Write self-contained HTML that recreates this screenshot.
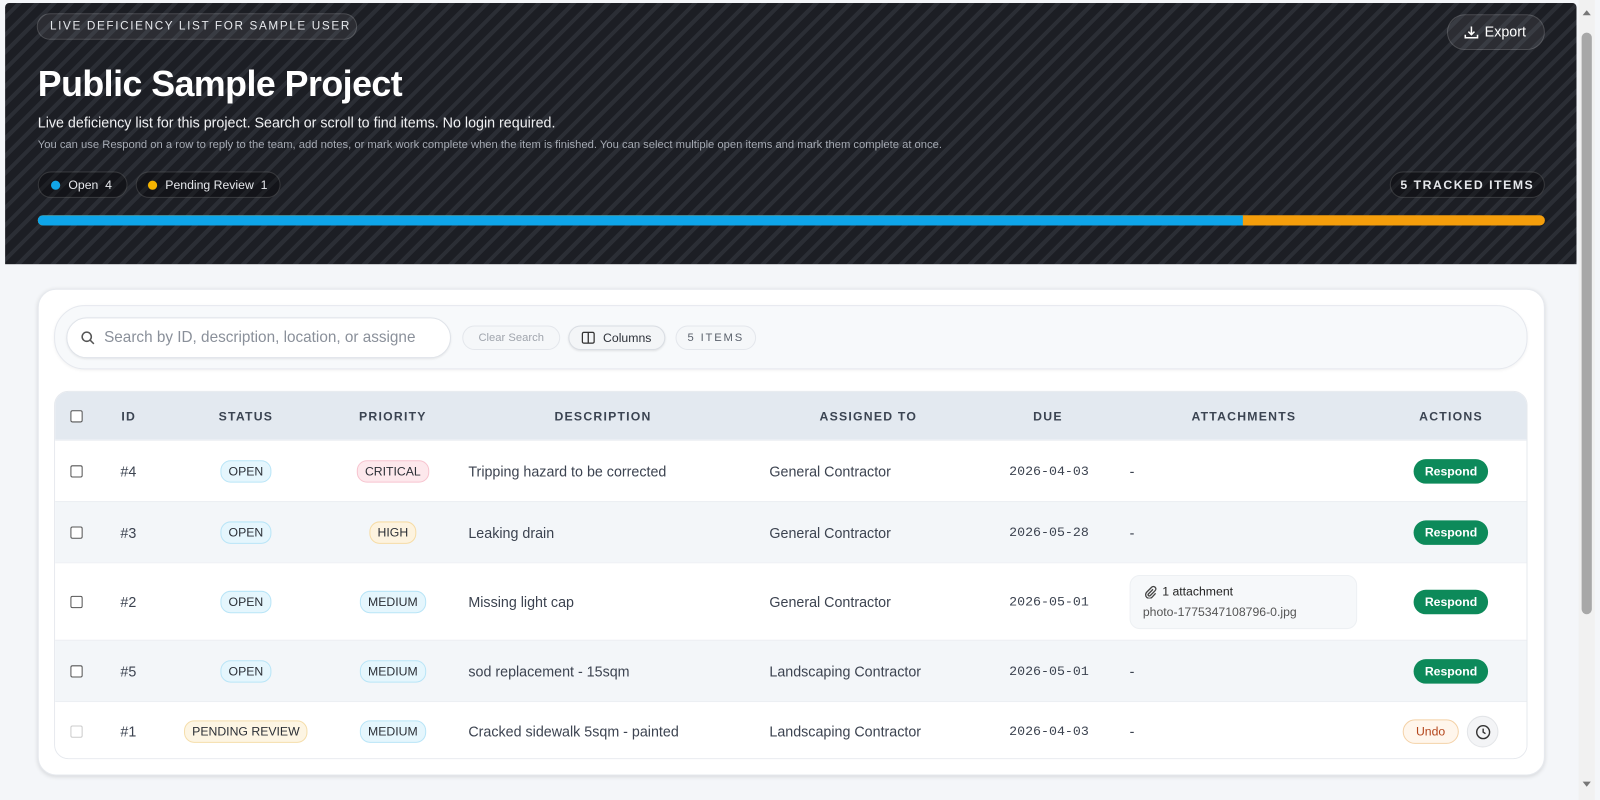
<!DOCTYPE html><html><head><style>
*{box-sizing:border-box;margin:0;padding:0}
html,body{width:1600px;height:800px;overflow:hidden;background:#f4f6f9;font-family:"Liberation Sans",sans-serif}
#w{position:absolute;left:0;top:0;width:1568px;height:784px;transform:scale(1.0204);transform-origin:0 0}
.hdr{position:absolute;left:5px;top:3px;width:1540px;height:256px;background:#1d1f25;background-image:repeating-linear-gradient(135deg,#1c1e24 0 8px,#2b2e35 8px 12px);border-radius:4px 4px 0 0}
.pill{position:absolute;border-radius:20px;border:1px solid rgba(255,255,255,.15);background:rgba(255,255,255,.07);color:#e6e8ec;white-space:nowrap}
.sb{position:absolute;left:1547px;top:0;width:16px;height:784px;background:#f1f1f1}
.card{position:absolute;left:37px;top:283px;width:1477px;height:477px;background:#fff;border-radius:18px;box-shadow:0 1px 4px rgba(0,0,0,.12);border:1px solid #e6e9ee}
.tool{position:absolute;left:53px;top:299px;width:1444px;height:63px;border-radius:30px;background:#f7f9fb;border:1px solid #e5e8ee;box-shadow:0 1px 3px rgba(0,0,0,.06)}
.tbl{position:absolute;left:53px;top:383px;width:1444px;height:361px;border-radius:14px;overflow:hidden;border:1px solid #e6e9ee}
.th{height:47px;background:#e3e9f0;position:relative;font-size:12px;letter-spacing:1.2px;color:#3b4452;font-weight:bold}
.row{position:relative;border-top:1px solid #eceff3;font-size:14px;color:#3c4350}
.a{position:absolute;top:50%;transform:translateY(-50%);white-space:nowrap}
.c{transform:translate(-50%,-50%)}
.cb{width:12px;height:12px;border:1.3px solid #555;border-radius:2px;background:#fff}
.bd{font-size:12px;padding:3px 7px;border-radius:10px;color:#2b2f36}
.open{background:#e5f6fd;border:1px solid #b9e5f7}
.resp{background:#0d8a5a;color:#fff;font-size:12px;padding:5px 11px;border-radius:12px;font-weight:bold}
.mono{font-family:"Liberation Mono",monospace;font-size:13px}
</style></head><body><div id="w">
<div class="hdr">
<div class="pill" style="left:31px;top:10px;height:26px;width:314px;font-size:11.5px;letter-spacing:1.6px;line-height:24px;padding-left:12px">LIVE DEFICIENCY LIST FOR SAMPLE USER</div>
<div class="pill" style="left:1413px;top:11px;width:96px;height:35px;font-size:14px;line-height:33px;padding-left:36px;color:#fff">Export<svg style="position:absolute;left:16px;top:10px" width="14" height="14" viewBox="0 0 14 14" fill="none" stroke="#fff" stroke-width="1.5"><path d="M7 1v8M4 6l3 3 3-3M1 9v3h12V9"/></svg></div>
<div style="position:absolute;left:32px;top:60px;font-size:35px;font-weight:bold;color:#fff;letter-spacing:-.5px">Public Sample Project</div>
<div style="position:absolute;left:32px;top:109px;font-size:14px;color:#f0f1f3">Live deficiency list for this project. Search or scroll to find items. No login required.</div>
<div style="position:absolute;left:32px;top:133px;font-size:11px;color:#a5aab3">You can use Respond on a row to reply to the team, add notes, or mark work complete when the item is finished. You can select multiple open items and mark them complete at once.</div>
<div class="pill" style="left:32px;top:165px;width:88px;height:26px;font-size:12px;line-height:24px;padding-left:29px;background:rgba(0,0,0,.3)"><span style="position:absolute;left:12px;top:8px;width:9px;height:9px;border-radius:50%;background:#12a6e8"></span>Open &nbsp;4</div>
<div class="pill" style="left:128px;top:165px;width:142px;height:26px;font-size:12px;line-height:24px;padding-left:28px;background:rgba(0,0,0,.3)"><span style="position:absolute;left:11px;top:8px;width:9px;height:9px;border-radius:50%;background:#f5b300"></span>Pending Review &nbsp;1</div>
<div class="pill" style="left:1357px;top:165px;width:152px;height:26px;font-size:12px;line-height:24px;text-align:center;letter-spacing:1.5px;font-weight:bold;background:rgba(0,0,0,.3)">5 TRACKED ITEMS</div>
<div style="position:absolute;left:32px;top:208px;width:1477px;height:10px;border-radius:5px;background:#f59e0b;overflow:hidden"><div style="width:1181px;height:10px;background:#0ea5e9"></div></div>
</div>
<div class="sb"><div style="position:absolute;left:3px;top:32px;width:10px;height:570px;background:#a8a8a8;border-radius:5px"></div><div style="position:absolute;left:4px;top:10px;border:4px solid transparent;border-bottom:5px solid #777;border-top:0"></div><div style="position:absolute;left:4px;top:766px;border:4px solid transparent;border-top:5px solid #777;border-bottom:0"></div></div>
<div class="card"></div>
<div class="tool">
<div style="position:absolute;left:11px;top:11px;width:377px;height:40px;border-radius:20px;background:#fff;border:1px solid #dfe3e9;box-shadow:0 1px 2px rgba(0,0,0,.08);font-size:15px;color:#8a909a;line-height:38px;padding-left:36px;overflow:hidden;white-space:nowrap">Search by ID, description, location, or assigne<svg style="position:absolute;left:13px;top:12px" width="14" height="14" viewBox="0 0 14 14" fill="none" stroke="#555" stroke-width="1.5"><circle cx="6" cy="6" r="4.5"/><path d="M9.5 9.5L13 13"/></svg></div>
<div style="position:absolute;left:399px;top:19px;width:96px;height:24px;border-radius:12px;border:1px solid #e4e7ec;background:#f5f7f9;font-size:11px;color:#a0a5ad;text-align:center;line-height:22px">Clear Search</div>
<div style="position:absolute;left:503px;top:19px;width:95px;height:24px;border-radius:12px;border:1px solid #d9dde3;background:#f3f5f7;box-shadow:0 1px 2px rgba(0,0,0,.1);font-size:12px;color:#2c3038;line-height:22px;padding-left:33px">Columns<svg style="position:absolute;left:12px;top:5px" width="13" height="12" viewBox="0 0 13 12" fill="none" stroke="#333" stroke-width="1.3"><rect x=".7" y=".7" width="11.6" height="10.6" rx="1.5"/><path d="M6.5 1v10"/></svg></div>
<div style="position:absolute;left:608px;top:19px;width:79px;height:24px;border-radius:12px;border:1px solid #e4e7ec;background:#f5f7f9;font-size:11px;letter-spacing:1.8px;color:#5a616c;text-align:center;line-height:22px">5 ITEMS</div>
</div>
<div class="tbl">
<div class="th"><span class="a cb" style="left:15px"></span><span class="a" style="left:65px">ID</span><span class="a c" style="left:187px">STATUS</span><span class="a c" style="left:331px">PRIORITY</span><span class="a c" style="left:537px">DESCRIPTION</span><span class="a c" style="left:797px">ASSIGNED TO</span><span class="a c" style="left:973px">DUE</span><span class="a c" style="left:1165px">ATTACHMENTS</span><span class="a c" style="left:1368px">ACTIONS</span></div>
<div class="row" style="height:60px;background:#fff"><span class="a cb" style="left:15px"></span><span class="a" style="left:64px">#4</span><span class="a c bd open" style="left:187px">OPEN</span><span class="a c bd" style="left:331px;background:#fde8ec;border:1px solid #f7c4cf">CRITICAL</span><span class="a" style="left:405px">Tripping hazard to be corrected</span><span class="a" style="left:700px">General Contractor</span><span class="a mono" style="left:935px">2026-04-03</span><span class="a" style="left:1053px">-</span><span class="a c resp" style="left:1368px">Respond</span></div>
<div class="row" style="height:60px;background:#f3f6f9"><span class="a cb" style="left:15px"></span><span class="a" style="left:64px">#3</span><span class="a c bd open" style="left:187px">OPEN</span><span class="a c bd" style="left:331px;background:#fdf3df;border:1px solid #f6dca6">HIGH</span><span class="a" style="left:405px">Leaking drain</span><span class="a" style="left:700px">General Contractor</span><span class="a mono" style="left:935px">2026-05-28</span><span class="a" style="left:1053px">-</span><span class="a c resp" style="left:1368px">Respond</span></div>
<div class="row" style="height:76px;background:#fff"><span class="a cb" style="left:15px"></span><span class="a" style="left:64px">#2</span><span class="a c bd open" style="left:187px">OPEN</span><span class="a c bd open" style="left:331px">MEDIUM</span><span class="a" style="left:405px">Missing light cap</span><span class="a" style="left:700px">General Contractor</span><span class="a mono" style="left:935px">2026-05-01</span>
<div class="a" style="left:1053px;width:223px;height:53px;border-radius:10px;background:#f6f8fa;border:1px solid #edf0f3;font-size:12px"><div style="position:absolute;left:31px;top:8px;color:#222">1 attachment</div><svg style="position:absolute;left:13px;top:9px" width="13" height="13" viewBox="0 0 13 13" fill="none" stroke="#444" stroke-width="1.3"><path d="M9 4L4.5 8.5a1.2 1.2 0 0 0 1.7 1.7L11 5.4a2.4 2.4 0 0 0-3.4-3.4L2.8 6.8a3.6 3.6 0 0 0 5.1 5.1L11.5 8"/></svg><div style="position:absolute;left:12px;top:28px;color:#555">photo-1775347108796-0.jpg</div></div>
<span class="a c resp" style="left:1368px">Respond</span></div>
<div class="row" style="height:60px;background:#f3f6f9"><span class="a cb" style="left:15px"></span><span class="a" style="left:64px">#5</span><span class="a c bd open" style="left:187px">OPEN</span><span class="a c bd open" style="left:331px">MEDIUM</span><span class="a" style="left:405px">sod replacement - 15sqm</span><span class="a" style="left:700px">Landscaping Contractor</span><span class="a mono" style="left:935px">2026-05-01</span><span class="a" style="left:1053px">-</span><span class="a c resp" style="left:1368px">Respond</span></div>
<div class="row" style="height:58px;background:#fff"><span class="a cb" style="left:15px;border-color:#ccc"></span><span class="a" style="left:64px">#1</span><span class="a c bd" style="left:187px;background:#fdf5e3;border:1px solid #f5deab">PENDING REVIEW</span><span class="a c bd open" style="left:331px">MEDIUM</span><span class="a" style="left:405px">Cracked sidewalk 5sqm - painted</span><span class="a" style="left:700px">Landscaping Contractor</span><span class="a mono" style="left:935px">2026-04-03</span><span class="a" style="left:1053px">-</span><span class="a c" style="left:1348px;background:#fff6ec;border:1px solid #f4d2a8;color:#b4461c;font-size:12px;padding:4px 12px;border-radius:12px">Undo</span><span class="a c" style="left:1399px;width:31px;height:31px;border-radius:50%;background:#f3f4f6;border:1px solid #e3e5e8"><svg style="position:absolute;left:7px;top:7px" width="16" height="16" viewBox="0 0 16 16" fill="none" stroke="#333" stroke-width="1.4"><circle cx="8" cy="8" r="6.3"/><path d="M8 4.5V8l2.3 1.5"/></svg></span></div>
</div>
</div></body></html>
